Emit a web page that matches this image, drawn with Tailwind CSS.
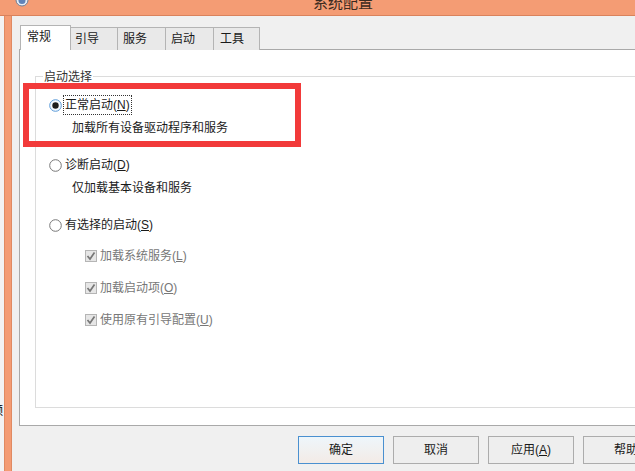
<!DOCTYPE html>
<html lang="zh-CN"><head><meta charset="utf-8"><script src="https://cdn.jsdelivr.net/npm/@tailwindcss/browser@4"></script></head>
<body class="m-0 overflow-hidden bg-white">
<div class="relative flex w-[635px] h-[471px] overflow-hidden bg-[#f49c74] text-[12px] leading-[18px] text-[#1a1a1a] font-['Liberation_Sans','Noto_Sans_CJK_SC',sans-serif]">
  <div class="w-[4px] shrink-0 bg-[#f3f3f3] overflow-hidden relative"><span class="absolute left-[-9px] top-[402px] text-[12px] text-black">频</span></div>
  <div class="w-[8px] shrink-0 bg-[#f49c74] border-x border-[#e08a62]"></div>
  <div class="flex-1 flex flex-col min-w-0">
    <div class="h-[16px] -ml-[12px] shrink-0 bg-[#f49c74] border-b border-[#d9825c] relative overflow-hidden">
      <span class="absolute left-[313px] top-[-7px] text-[15px] leading-[20px] text-[#3a2a20] whitespace-nowrap">系统配置</span>
      <svg class="absolute left-[15px] top-[-7px]" width="14" height="14" viewBox="0 0 14 14"><circle cx="7" cy="7" r="6" fill="#e8edf3" stroke="#6d7f98"/><circle cx="7" cy="7.5" r="3.5" fill="#5f83b8"/></svg>
    </div>
    <div class="flex-1 flex flex-col bg-[#f0f0f0] min-h-0">
      <div class="flex items-end h-[34px] pl-[8px] shrink-0 relative z-10">
        <div class="w-[51px] h-[25px] bg-white border border-b-0 border-[#b4b4b4] pl-[6px] pt-[2px]">常规</div>
        <div class="w-[47px] h-[23px] bg-[#e9e9e9] border border-l-0 border-b-0 border-[#b4b4b4] pl-[4px] pt-[2px]">引导</div>
        <div class="w-[48px] h-[23px] bg-[#e9e9e9] border border-l-0 border-b-0 border-[#b4b4b4] pl-[5px] pt-[2px]">服务</div>
        <div class="w-[48px] h-[23px] bg-[#e9e9e9] border border-l-0 border-b-0 border-[#b4b4b4] pl-[5px] pt-[2px]">启动</div>
        <div class="w-[46px] h-[23px] bg-[#e9e9e9] border border-l-0 border-b-0 border-[#b4b4b4] pl-[6px] pt-[2px]">工具</div>
      </div>
      <div class="ml-[7px] h-[377px] shrink-0 -mt-px bg-white border border-r-0 border-[#a9a9a9] pl-[15px] pt-[26px] pb-[17px]">
        <div class="relative h-full border border-r-0 border-[#dcdcdc] pl-[13px] pt-[19px]">
          <span class="absolute left-[7px] top-[-9px] bg-white px-[1px] text-[#333]">启动选择</span>
          <div class="flex items-center h-[18px]">
            <svg class="shrink-0" width="13" height="13" viewBox="0 0 13 13"><circle cx="6.5" cy="6.5" r="5.8" fill="#f4f9ff" stroke="#5b9bd8"/><circle cx="6.5" cy="6.5" r="3.2" fill="#1c1c1c"/></svg>
            <span class="ml-[2px] px-[1px] h-[18px] outline-1 outline-dotted outline-[#333]">正常启动(<span class="underline">N</span>)</span>
          </div>
          <div class="ml-[23px] mt-[5px] h-[18px]">加载所有设备驱动程序和服务</div>
          <div class="flex items-center h-[18px] mt-[19px]">
            <svg class="shrink-0" width="13" height="13" viewBox="0 0 13 13"><circle cx="6.5" cy="6.5" r="5.8" fill="#fff" stroke="#777"/></svg>
            <span class="ml-[3px]">诊断启动(<span class="underline">D</span>)</span>
          </div>
          <div class="ml-[23px] mt-[5px] h-[18px]">仅加载基本设备和服务</div>
          <div class="flex items-center h-[18px] mt-[19px]">
            <svg class="shrink-0" width="13" height="13" viewBox="0 0 13 13"><circle cx="6.5" cy="6.5" r="5.8" fill="#fff" stroke="#777"/></svg>
            <span class="ml-[3px]">有选择的启动(<span class="underline">S</span>)</span>
          </div>
          <div class="ml-[36px] mt-[13px] flex flex-col gap-[14px] text-[#777]">
            <div class="flex items-center h-[18px]"><svg class="shrink-0" width="12" height="12" viewBox="0 0 12 12"><rect x=".5" y=".5" width="11" height="11" fill="#e6e6e6" stroke="#b5b5b5"/><path d="M2.5 6l2.5 3 4.5-6.5" fill="none" stroke="#777" stroke-width="1.7"/></svg><span class="ml-[3px]">加载系统服务(<span class="underline">L</span>)</span></div>
            <div class="flex items-center h-[18px]"><svg class="shrink-0" width="12" height="12" viewBox="0 0 12 12"><rect x=".5" y=".5" width="11" height="11" fill="#e6e6e6" stroke="#b5b5b5"/><path d="M2.5 6l2.5 3 4.5-6.5" fill="none" stroke="#777" stroke-width="1.7"/></svg><span class="ml-[3px]">加载启动项(<span class="underline">O</span>)</span></div>
            <div class="flex items-center h-[18px]"><svg class="shrink-0" width="12" height="12" viewBox="0 0 12 12"><rect x=".5" y=".5" width="11" height="11" fill="#e6e6e6" stroke="#b5b5b5"/><path d="M2.5 6l2.5 3 4.5-6.5" fill="none" stroke="#777" stroke-width="1.7"/></svg><span class="ml-[3px]">使用原有引导配置(<span class="underline">U</span>)</span></div>
          </div>
        </div>
      </div>
      <div class="flex gap-[9px] pl-[286px] pt-[10px] shrink-0">
        <div class="w-[86px] h-[28px] shrink-0 flex items-center justify-center bg-gradient-to-b from-[#eef6fb] to-[#f3ebe6] border border-[#4a90d0]">确定</div>
        <div class="w-[86px] h-[28px] shrink-0 flex items-center justify-center bg-[#eeeeee] border border-[#acacac]">取消</div>
        <div class="w-[86px] h-[28px] shrink-0 flex items-center justify-center bg-[#eeeeee] border border-[#acacac]"><span>应用(<span class="underline">A</span>)</span></div>
        <div class="w-[86px] h-[28px] shrink-0 flex items-center justify-center bg-[#eeeeee] border border-[#acacac]">帮助</div>
      </div>
    </div>
  </div>
  <div class="absolute left-[23px] top-[83px] w-[278px] h-[64px] border-[6px] border-[#f23a3a]"></div>
</div>
</body></html>
